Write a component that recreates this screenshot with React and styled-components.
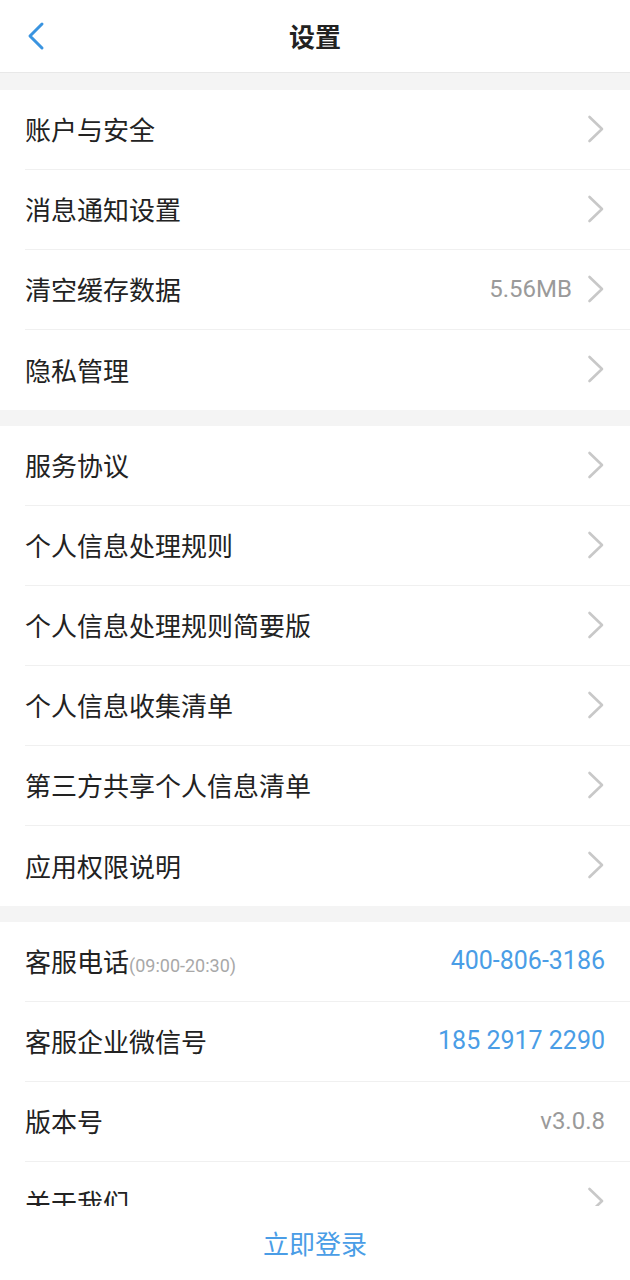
import React from "react";
import styled, { createGlobalStyle } from "styled-components";

const Global = createGlobalStyle`
  html, body { margin: 0; padding: 0; background: #fff; }
  body { font-family: Roboto, "Noto Sans CJK SC", sans-serif; }
  * { box-sizing: border-box; }
`;

const Page = styled.div`
  width: 630px;
  height: 1280px;
  display: flex;
  flex-direction: column;
  background: #fff;
  overflow: hidden;
`;

const Header = styled.header`
  height: 73px;
  flex: none;
  display: grid;
  grid-template-columns: 80px 1fr 80px;
  align-items: center;
  border-bottom: 1px solid #e8e8e8;
`;

const BackButton = styled.button`
  border: none;
  background: none;
  padding: 0 0 0 26px;
  height: 100%;
  display: flex;
  align-items: center;
  cursor: pointer;
`;

const Title = styled.h1`
  margin: 0 0 2px;
  text-align: center;
  font-size: 26px;
  font-weight: 700;
  color: #222;
  font-family: "Noto Sans CJK SC", sans-serif;
`;

const Scroll = styled.main`
  flex: 1;
  overflow: hidden;
  background: #f4f4f4;
`;

const Section = styled.section`
  background: #fff;
  margin-top: ${(p) => p.$gap}px;
`;

const Row = styled.div`
  height: 80px;
  margin-left: 25px;
  padding-right: 25px;
  padding-bottom: 2px;
  display: flex;
  align-items: center;
  border-bottom: 1px solid #f0f0f0;
  &:last-child { border-bottom: none; }
`;

const Label = styled.span`
  flex: 1;
  font-size: 26px;
  color: #222;
  font-family: "Noto Sans CJK SC", sans-serif;
  display: flex;
  align-items: baseline;
  white-space: nowrap;
`;

const Hint = styled.span`
  font-size: 18px;
  color: #a8a8a8;
  font-family: Roboto, sans-serif;
`;

const Value = styled.span`
  font-size: ${(p) => (p.$link ? "25px" : "24px")};
  font-family: Roboto, sans-serif;
  color: ${(p) => (p.$link ? "#4a9de6" : "#9a9a9a")};
  margin-right: ${(p) => (p.$withArrow ? "15px" : "0")};
`;

const Footer = styled.footer`
  height: 74px;
  flex: none;
  background: #fff;
  display: flex;
  align-items: center;
  justify-content: center;
`;

const LoginLink = styled.button`
  border: none;
  background: none;
  font-size: 26px;
  color: #4a9de6;
  font-family: "Noto Sans CJK SC", sans-serif;
  padding: 0;
  margin-top: -2px;
  cursor: pointer;
`;

const BackIcon = () => (
  <svg width="20" height="30" viewBox="0 0 20 30">
    <path d="M16 3 L4 15 L16 27" fill="none" stroke="#3a94e0" strokeWidth="3" strokeLinecap="round" strokeLinejoin="round" />
  </svg>
);

const Chevron = () => (
  <svg width="18" height="28" viewBox="0 0 18 28">
    <path d="M2.5 2 L15 14 L2.5 26" fill="none" stroke="#c8c8c8" strokeWidth="2.6" strokeLinecap="round" strokeLinejoin="round" />
  </svg>
);

const sections = [
  {
    gap: 17,
    rows: [
      { label: "账户与安全", arrow: true },
      { label: "消息通知设置", arrow: true },
      { label: "清空缓存数据", value: "5.56MB", arrow: true },
      { label: "隐私管理", arrow: true },
    ],
  },
  {
    gap: 16,
    rows: [
      { label: "服务协议", arrow: true },
      { label: "个人信息处理规则", arrow: true },
      { label: "个人信息处理规则简要版", arrow: true },
      { label: "个人信息收集清单", arrow: true },
      { label: "第三方共享个人信息清单", arrow: true },
      { label: "应用权限说明", arrow: true },
    ],
  },
  {
    gap: 16,
    rows: [
      { label: "客服电话", hint: "(09:00-20:30)", value: "400-806-3186", link: true },
      { label: "客服企业微信号", value: "185 2917 2290", link: true },
      { label: "版本号", value: "v3.0.8" },
      { label: "关于我们", arrow: true },
    ],
  },
];

export default function App() {
  return (
    <>
      <Global />
      <Page>
        <Header>
          <BackButton aria-label="返回">
            <BackIcon />
          </BackButton>
          <Title>设置</Title>
          <span />
        </Header>
        <Scroll>
          {sections.map((s, i) => (
            <Section key={i} $gap={s.gap}>
              {s.rows.map((r) => (
                <Row key={r.label}>
                  <Label>
                    {r.label}
                    {r.hint && <Hint>{r.hint}</Hint>}
                  </Label>
                  {r.value && (
                    <Value $link={r.link} $withArrow={r.arrow}>
                      {r.value}
                    </Value>
                  )}
                  {r.arrow && <Chevron />}
                </Row>
              ))}
            </Section>
          ))}
        </Scroll>
        <Footer>
          <LoginLink>立即登录</LoginLink>
        </Footer>
      </Page>
    </>
  );
}
